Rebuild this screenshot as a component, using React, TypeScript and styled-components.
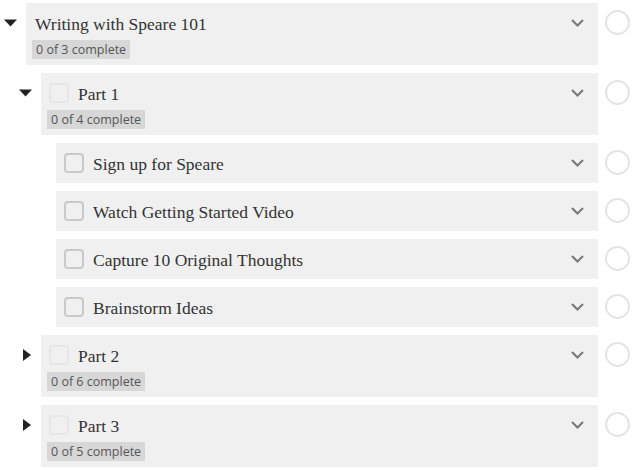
import React from "react";
import styled, { createGlobalStyle } from "styled-components";

const Global = createGlobalStyle`
  html, body { margin: 0; padding: 0; background: #ffffff; }
  body { font-family: "Liberation Serif", serif; }
`;

type Item = {
  title: string;
  children?: Item[];
  open?: boolean;
};

const data: Item = {
  title: "Writing with Speare 101",
  open: true,
  children: [
    {
      title: "Part 1",
      open: true,
      children: [
        { title: "Sign up for Speare" },
        { title: "Watch Getting Started Video" },
        { title: "Capture 10 Original Thoughts" },
        { title: "Brainstorm Ideas" },
      ],
    },
    { title: "Part 2", children: new Array(6).fill(0).map((_, i) => ({ title: `Item ${i}` })) },
    { title: "Part 3", children: new Array(5).fill(0).map((_, i) => ({ title: `Item ${i}` })) },
  ],
};

const Page = styled.div`
  display: flex;
  flex-direction: column;
  gap: 8px;
  padding: 3px 4px 0 0;
`;

const Row = styled.div<{ $level: number }>`
  display: flex;
  align-items: flex-start;
  padding-left: ${(p) => p.$level * 15}px;
`;

const ToggleCol = styled.div`
  width: 26px;
  height: 40px;
  flex: none;
  display: flex;
  align-items: center;
  padding-left: 4px;
  box-sizing: border-box;
`;

const Spacer = styled.div`
  width: 26px;
  flex: none;
`;

const Card = styled.div`
  flex: 1;
  background: #f0f0f0;
  display: flex;
  flex-direction: column;
`;

const Header = styled.div<{ $root: boolean }>`
  height: 40px;
  display: flex;
  align-items: center;
  padding: 0 14px 0 ${(p) => (p.$root ? 9 : 8)}px;
`;

const Check = styled.div<{ $leaf: boolean }>`
  width: 20px;
  height: 20px;
  box-sizing: border-box;
  border: 2px solid ${(p) => (p.$leaf ? "#c9c9c9" : "#e6e6e6")};
  border-radius: 4px;
  margin-right: 9px;
  flex: none;
`;

const Title = styled.span`
  flex: 1;
  font-family: "Liberation Serif", serif;
  font-size: 17.5px;
  line-height: 20px;
  margin-top: 2px;
  color: #333333;
  white-space: nowrap;
`;

const Chevron = styled.svg`
  flex: none;
  display: block;
`;

const BadgeWrap = styled.div`
  display: flex;
  margin: -3px 0 0 6px;
  padding-bottom: 6px;
`;

const Badge = styled.span`
  background: #d7d7d7;
  color: #555555;
  font-family: "Open Sans", sans-serif;
  font-size: 12.5px;
  line-height: 19px;
  height: 19px;
  padding: 0 4px;
`;

const Circle = styled.div`
  width: 25px;
  height: 25px;
  box-sizing: border-box;
  border: 2px solid #e4e4e4;
  border-radius: 50%;
  margin: 7px 0 0 7px;
  flex: none;
`;

const Arrow = ({ open }: { open: boolean }) =>
  open ? (
    <svg width="13" height="8" viewBox="0 0 13 8">
      <polygon points="0,0.5 13,0.5 6.5,7.5" fill="#222" />
    </svg>
  ) : (
    <svg width="13" height="12" viewBox="0 0 13 12">
      <polygon points="4,0 12,6 4,12" fill="#222" />
    </svg>
  );

const ChevronIcon = () => (
  <Chevron width="13" height="8" viewBox="0 0 13 8">
    <polyline points="1,1 6.5,6.5 12,1" fill="none" stroke="#777" strokeWidth="2" />
  </Chevron>
);

const Node = ({ item, level }: { item: Item; level: number }) => {
  const hasKids = !!item.children && item.children.length > 0;
  const total = item.children ? item.children.length : 0;
  return (
    <>
      <Row $level={level}>
        {hasKids ? (
          <ToggleCol>
            <Arrow open={!!item.open} />
          </ToggleCol>
        ) : (
          <Spacer />
        )}
        <Card>
          <Header $root={level === 0}>
            {level > 0 && <Check $leaf={!hasKids} />}
            <Title>{item.title}</Title>
            <ChevronIcon />
          </Header>
          {hasKids && (
            <BadgeWrap>
              <Badge>{`0 of ${total} complete`}</Badge>
            </BadgeWrap>
          )}
        </Card>
        <Circle />
      </Row>
      {hasKids &&
        item.open &&
        item.children!.map((c) => <Node key={c.title} item={c} level={level + 1} />)}
    </>
  );
};

export default function App() {
  return (
    <>
      <Global />
      <Page>
        <Node item={data} level={0} />
      </Page>
    </>
  );
}
